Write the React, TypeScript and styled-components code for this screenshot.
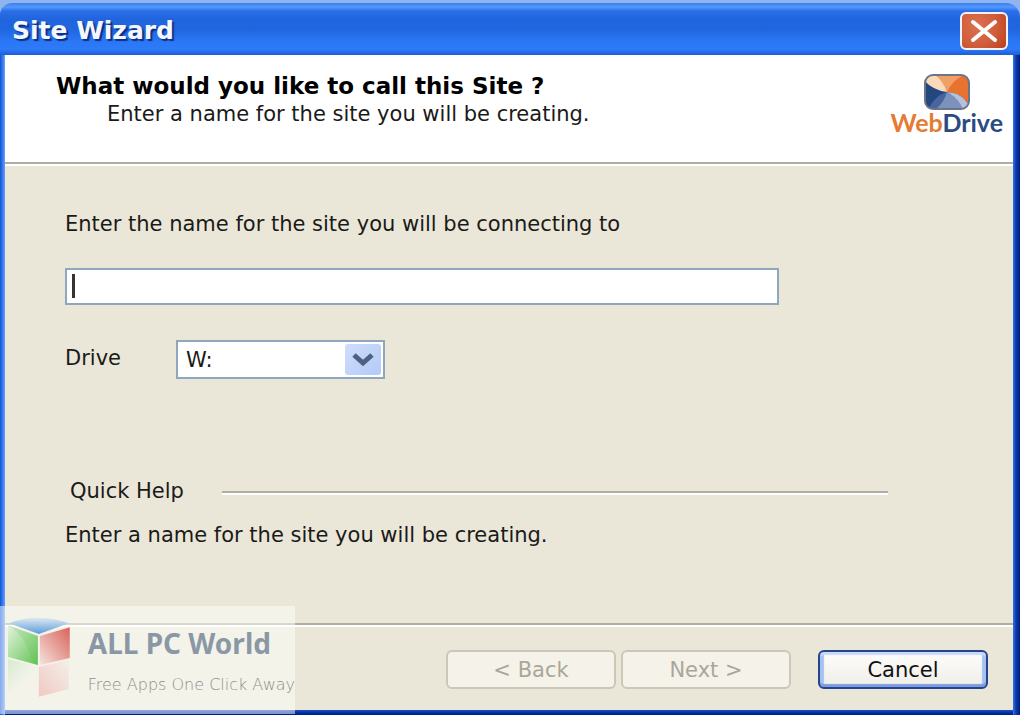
import React, { useState } from "react";
import styled, { createGlobalStyle } from "styled-components";

const uiFont = `"DejaVu Sans", Verdana, sans-serif`;

const GlobalStyle = createGlobalStyle`
  *, *::before, *::after { box-sizing: border-box; }
  body {
    margin: 0;
    background: #8fb4ee;
    color: #1a1a18;
    font-family: ${uiFont};
    font-size: 21px;
    line-height: 28px;
  }
  h1, h2, p { margin: 0; }
  button, input, select { font: inherit; color: inherit; }
`;

const Window = styled.main`
  position: relative;
  display: flex;
  flex-direction: column;
  min-height: 100vh;
  padding: 3px 7px 5px 5px;
  background:
    linear-gradient(90deg, #1552d4 0, #3c80f2 3px, #6aa2f8 5px, transparent 5px) 0 54px no-repeat,
    linear-gradient(270deg, #001c80 0, #0a3cae 4px, #3a72e4 7px, transparent 7px) 0 54px no-repeat,
    linear-gradient(0deg, #001c80 0, #0738a8 3px, #1c52cc 5px, transparent 5px),
    linear-gradient(180deg, #8fb4ee 30px, #1c5fe0 30px);
`;

const TitleBar = styled.header`
  display: flex;
  align-items: center;
  justify-content: space-between;
  height: 52px;
  margin: 0 -7px 0 -5px;
  padding: 3px 12px 0;
  border-radius: 12px 14px 0 0;
  background: linear-gradient(180deg, #3b7ff0 0, #5499ff 4px, #2c6fe8 8px, #2065de 16px, #2066e0 26px, #2b76f4 38px, #2d7bf9 46px, #1c5cd8 52px);
`;

const WindowTitle = styled.h1`
  color: #f4f7ff;
  font-size: 25px;
  line-height: 28px;
  font-weight: 700;
  text-shadow: 2px 2px 1px #0c2f86;
`;

const CloseButton = styled.button`
  display: grid;
  place-items: center;
  width: 48px;
  height: 38px;
  padding: 0;
  border: 2px solid #f4f2f8;
  border-radius: 6px;
  background: radial-gradient(circle at 35% 35%, #db7250 0, #d05c3a 55%, #b93f1b 100%);
`;

const Banner = styled.section`
  display: flex;
  justify-content: space-between;
  height: 107px;
  padding: 17px 10px 0 51px;
  background: #fff;
`;

const BannerTitle = styled.h2`
  color: #000;
  font-size: 23px;
  line-height: 28px;
  font-weight: 700;
`;

const BannerText = styled.p`
  padding-left: 51px;
`;

const Brand = styled.div`
  display: flex;
  flex-direction: column;
  align-items: center;
  padding-top: 2px;
`;

const BrandName = styled.span`
  color: #2b4a82;
  font-family: Lato, sans-serif;
  font-size: 25px;
  line-height: 24px;
  font-weight: 700;
  b { color: #e57b32; font-weight: inherit; }
`;

const Etched = styled.hr<{ $grow?: boolean }>`
  flex: ${(p) => (p.$grow ? "1" : "none")};
  height: 4px;
  margin: ${(p) => (p.$grow ? "4px 0 0" : "0")};
  border: solid;
  border-width: 2px 0;
  border-color: #b0aea2 transparent #fff;
`;

const Panel = styled.form`
  flex: 1;
  padding: 44px 120px 0 60px;
  background: #ebe7d8;
`;

const NameInput = styled.input`
  display: block;
  width: 100%;
  height: 37px;
  padding: 0 6px;
  border: 2px solid #8fa6bf;
  background: #fff;
  outline: none;
  caret-color: transparent;
`;

const NameField = styled.div`
  position: relative;
  max-width: 714px;
  margin: 30px 0 35px;
`;

const Caret = styled.span`
  position: absolute;
  top: 6px;
  left: 7px;
  width: 3px;
  height: 24px;
  background: #333;
`;

const DriveRow = styled.div`
  display: grid;
  grid-template-columns: 111px 209px;
`;

const DriveLabel = styled.label`
  padding-top: 4px;
`;

const DriveField = styled.div`
  position: relative;
`;

const DriveSelect = styled.select`
  display: block;
  appearance: none;
  width: 100%;
  height: 39px;
  padding: 0 8px;
  border: 2px solid #8fa6bf;
  border-radius: 0;
  background: #fff;
  outline: none;
`;

const DropMark = styled.span`
  position: absolute;
  top: 4px;
  right: 4px;
  display: grid;
  place-items: center;
  width: 36px;
  height: 31px;
  border-radius: 3px;
  background: linear-gradient(135deg, #cfddfc, #b3caf6);
  pointer-events: none;
`;

const HelpHeading = styled.div`
  display: flex;
  align-items: center;
  gap: 38px;
  margin: 98px 0 16px;
  padding: 0 5px;
  h2 { font-size: 21px; line-height: 28px; font-weight: 400; }
`;

const Footer = styled.footer`
  display: flex;
  justify-content: flex-end;
  gap: 5px;
  height: 83px;
  padding: 23px 25px 0;
  background: #ebe7d8;
`;

const WizardButton = styled.button<{ $primary?: boolean }>`
  width: 170px;
  height: 39px;
  padding: 0;
  border: 2px solid ${(p) => (p.$primary ? "#24458c" : "#cbc8ba")};
  border-radius: 6px;
  margin-left: ${(p) => (p.$primary ? "22px" : "0")};
  background: ${(p) => (p.$primary ? "linear-gradient(#fdfdfb, #efede6)" : "#f5f2e9")};
  box-shadow: ${(p) => (p.$primary ? "inset 0 -3px 1px #7d9be0, inset 0 3px 1px #c9daf9, inset 4px 0 1px #a9c1f2, inset -4px 0 1px #a9c1f2" : "none")};
  color: ${(p) => (p.$primary ? "#111" : "#aaa798")};
`;

const Watermark = styled.aside`
  position: absolute;
  left: 0;
  bottom: 1px;
  display: flex;
  align-items: flex-start;
  gap: 17px;
  width: 295px;
  height: 108px;
  padding: 11px 0 0 8px;
  background: rgba(253, 255, 252, 0.5);
  white-space: nowrap;
`;

const WatermarkName = styled.p`
  padding: 6px 0 14px;
  color: #8a98a6;
  font-family: "Noto Sans", sans-serif;
  font-size: 28px;
  line-height: 40px;
  font-weight: 700;
`;

const WatermarkTag = styled.p`
  color: #8e8e88;
  font-size: 16px;
  line-height: 16px;
  font-weight: 200;
`;

export default function App() {
  const [name, setName] = useState("");
  const [drive, setDrive] = useState("W:");
  return (
    <>
      <GlobalStyle />
      <Window>
        <TitleBar>
          <WindowTitle>Site Wizard</WindowTitle>
          <CloseButton type="button" aria-label="Close">
            <svg width="28" height="24" viewBox="0 0 28 24" fill="none" stroke="#fff" strokeWidth="4" strokeLinecap="round">
              <path d="M3 3 25 21M25 3 3 21" />
            </svg>
          </CloseButton>
        </TitleBar>
        <Banner>
          <div>
            <BannerTitle>What would you like to call this Site ?</BannerTitle>
            <BannerText>Enter a name for the site you will be creating.</BannerText>
          </div>
          <Brand>
            <svg width="46" height="36" viewBox="0 0 46 36" aria-hidden="true">
              <defs>
                <clipPath id="badge"><rect x="1" y="1" width="44" height="34" rx="8" /></clipPath>
              </defs>
              <g clipPath="url(#badge)">
                <rect width="46" height="36" fill="#24477f" />
                <path d="M8 0H46V36Q43 20 23 18Z" fill="#e8732f" />
                <path d="M8 0H42Q29 5 23 18Q18 8 8 0Z" fill="#f0a067" />
                <path d="M0 6Q2 0 10 0Q19 7 23 18Q8 16 0 6Z" fill="#fbd9bb" />
                <path d="M23 18Q40 19 46 34V36H38Q34 25 23 18Z" fill="#b7c2da" />
                <path d="M23 18Q36 25 39 36H6Q10 24 23 18Z" fill="#7d91bd" />
                <path d="M23 18Q20 29 11 36H4Q10 22 23 18Z" fill="#48659e" />
              </g>
              <rect x="1" y="1" width="44" height="34" rx="8" fill="none" stroke="#6c7487" strokeWidth="2" />
            </svg>
            <BrandName><b>Web</b>Drive</BrandName>
          </Brand>
        </Banner>
        <Etched />
        <Panel onSubmit={(e) => e.preventDefault()}>
          <label htmlFor="site-name">Enter the name for the site you will be connecting to</label>
          <NameField>
            <NameInput id="site-name" value={name} onChange={(e) => setName(e.target.value)} />
            {name === "" && <Caret />}
          </NameField>
          <DriveRow>
            <DriveLabel htmlFor="drive">Drive</DriveLabel>
            <DriveField>
              <DriveSelect id="drive" value={drive} onChange={(e) => setDrive(e.target.value)}>
                <option>W:</option>
              </DriveSelect>
              <DropMark>
                <svg width="24" height="16" viewBox="0 0 24 16" fill="none" stroke="#4d6185" strokeWidth="5">
                  <path d="M3 3 12 11 21 3" />
                </svg>
              </DropMark>
            </DriveField>
          </DriveRow>
          <HelpHeading>
            <h2>Quick Help</h2>
            <Etched $grow />
          </HelpHeading>
          <p>Enter a name for the site you will be creating.</p>
        </Panel>
        <Etched />
        <Footer>
          <WizardButton type="button" disabled>&lt; Back</WizardButton>
          <WizardButton type="button" disabled>Next &gt;</WizardButton>
          <WizardButton type="button" $primary>Cancel</WizardButton>
        </Footer>
        <Watermark>
          <svg width="63" height="86" viewBox="0 0 63 86" aria-hidden="true">
            <defs>
              <linearGradient id="top" x1="0" y1="0" x2="0" y2="1"><stop offset="0" stopColor="#dfeaf1" /><stop offset="1" stopColor="#5b9bd8" /></linearGradient>
              <linearGradient id="left" x1="0" y1="0" x2="1" y2="1"><stop offset="0" stopColor="#e4f3dc" /><stop offset="1" stopColor="#62c255" /></linearGradient>
              <linearGradient id="right" x1="1" y1="0" x2="0" y2="1"><stop offset="0" stopColor="#d9625c" /><stop offset="1" stopColor="#f5e3dc" /></linearGradient>
              <linearGradient id="leftFade" x1="0" y1="0" x2="1" y2="1"><stop offset="0" stopColor="#d6ebce" /><stop offset="0.6" stopColor="#f4f3ea" /></linearGradient>
              <linearGradient id="rightFade" x1="0" y1="1" x2="1" y2="0"><stop offset="0" stopColor="#f0c9c2" /><stop offset="1" stopColor="#f4efe8" /></linearGradient>
            </defs>
            <path d="M1 6Q30-5 61 6L31 17Z" fill="url(#top)" />
            <path d="M0 8 30 19V48L0 40Z" fill="url(#left)" />
            <path d="M0 8Q20 20 24 46L30 48V19Z" fill="#62c255" opacity="0.2" />
            <path d="M32 19 62 10V41L32 48Z" fill="url(#right)" />
            <path d="M0 42 30 50V60L0 76Z" fill="url(#leftFade)" />
            <path d="M31 50 61 43V72L31 80Z" fill="url(#rightFade)" />
          </svg>
          <div>
            <WatermarkName>ALL PC World</WatermarkName>
            <WatermarkTag>Free Apps One Click Away</WatermarkTag>
          </div>
        </Watermark>
      </Window>
    </>
  );
}
